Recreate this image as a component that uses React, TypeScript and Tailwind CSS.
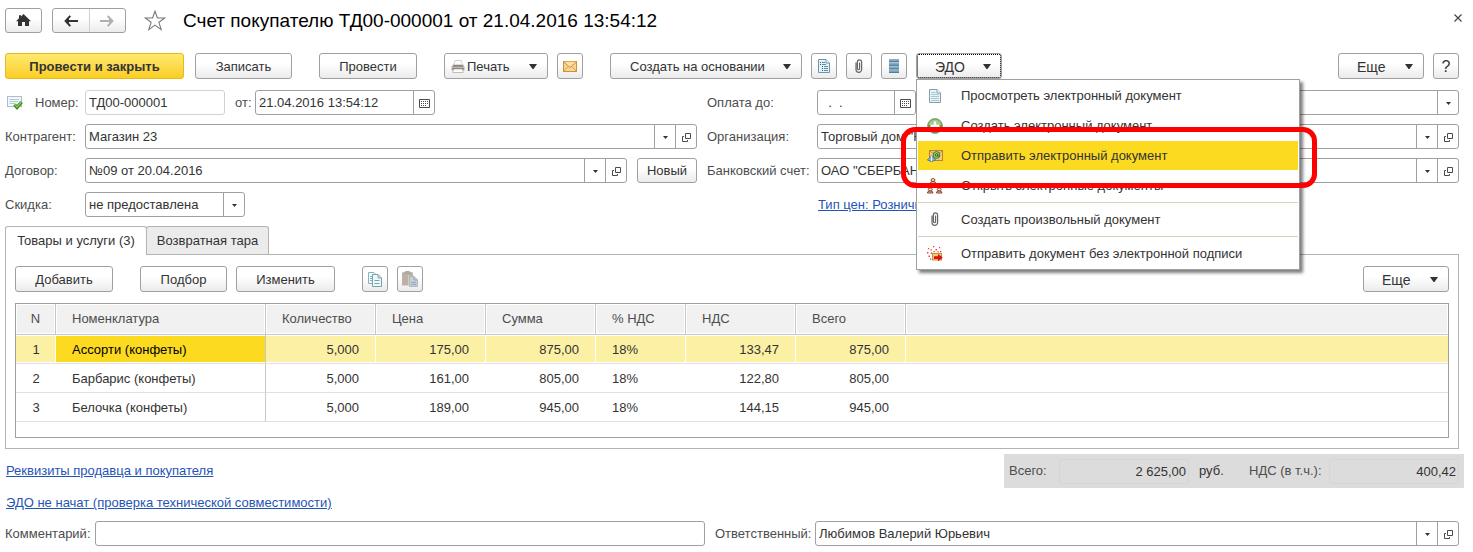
import clsx from 'clsx';
import React, { useState } from 'react';

interface IRow {
  name: string;
  qty: string;
  price: string;
  sum: string;
  vatRate: string;
  vat: string;
  total: string;
}

const rows: IRow[] = [
  { name: 'Ассорти (конфеты)', qty: '5,000', price: '175,00', sum: '875,00', vatRate: '18%', vat: '133,47', total: '875,00' },
  { name: 'Барбарис (конфеты)', qty: '5,000', price: '161,00', sum: '805,00', vatRate: '18%', vat: '122,80', total: '805,00' },
  { name: 'Белочка (конфеты)', qty: '5,000', price: '189,00', sum: '945,00', vatRate: '18%', vat: '144,15', total: '945,00' },
];

const columns = ['Номенклатура', 'Количество', 'Цена', 'Сумма', '% НДС', 'НДС', 'Всего'];

// Icons
const HomeIcon = () => (
  <svg width="15" height="13" viewBox="0 0 15 13" fill="#333">
    <path d="M7.5 0 15 7.2H13V12H9V8H6V12H2V7.2H0L3 4.3V1.3H5V2.4Z" />
  </svg>
);

const ArrowIcon = ({ color, flip }: { color: string; flip?: boolean }) => (
  <svg width="14" height="12" viewBox="0 0 14 12" fill="none" stroke={color} strokeWidth="2" className={flip ? 'rotate-180' : ''}>
    <path d="M1.5 6H14" />
    <path d="M6.3 .8 1.6 6 6.3 11.2" />
    <path d="M5 3 2 6 5 9Z" fill={color} stroke="none" />
  </svg>
);

const StarIcon = () => (
  <svg width="22" height="21" viewBox="0 0 22 21" fill="#fff" stroke="#777" strokeWidth="1.1">
    <path d="M11 1.2 13.4 8H20.8L14.9 12.3 17.2 19.6 11 15.1 4.8 19.6 7.1 12.3 1.2 8H8.6Z" />
  </svg>
);

const Caret = () => (
  <svg width="8" height="5" viewBox="0 0 8 5" fill="#333" className="shrink-0">
    <path d="M0 0H8L4.5 5H3.5Z" />
  </svg>
);

const SmallCaret = () => (
  <svg width="6" height="5" viewBox="0 0 6 5" fill="#333">
    <path d="M1 2H6L3.5 5Z" />
  </svg>
);

const OpenIcon = () => (
  <svg width="10" height="11" viewBox="0 0 10 11" fill="none" stroke="#4a4a4a">
    <path d="M4.5 2.5H9.5V7.5H4.5Z" />
    <path d="M3 5.5H1.5V10.5H6.5V9" />
  </svg>
);

const CalendarIcon = () => (
  <svg width="12" height="11" viewBox="0 0 12 11" fill="none" stroke="#4a4a4a">
    <path d="M1.5 2.5H11.5V10.5H1.5Z" />
    <path d="M3 4.5H10M3 6.5H10M3 8.5H8" strokeDasharray="1 1" />
  </svg>
);

const PrinterIcon = () => (
  <svg width="14" height="13" viewBox="0 0 14 13">
    <path d="M4 .5H10.5L11.5 5.5H2.5Z" fill="#fafbfc" stroke="#c3c8cd" strokeWidth=".8" />
    <path d="M2 4.5H12.2L13.6 7V10.5H.4V7Z" fill="#bdb8b0" />
    <path d="M2.5 5H11.6L12.4 6.8H1.6Z" fill="#8c8780" />
    <path d="M1.5 8.4H12.5V9.6H1.5Z" fill="#5a5650" />
    <path d="M2.6 9H11.4L12.2 12.5H1.8Z" fill="#fdfdf9" stroke="#aaa69e" strokeWidth=".7" />
  </svg>
);

const MailIcon = () => (
  <svg width="14" height="11" viewBox="0 0 14 11" fill="none" stroke="#cf8f35">
    <rect x=".5" y=".5" width="13" height="10" fill="#f9d594" />
    <path d="M.5 10.5 5 5.4M13.5 10.5 9 5.4" stroke="#dd9e45" />
    <path d="M.5 .8 7 6.6 13.5 .8" fill="#fbe0a6" />
  </svg>
);

const ListDocIcon = () => (
  <svg width="12" height="15" viewBox="0 0 12 15" fill="none" stroke="#6e96ab">
    <path d="M.5 .5H8L11.5 4V13.5H.5Z" fill="#e6f2f7" />
    <path d="M8 .5V4H11.5" fill="#fff" />
    <path d="M2 3.5H3M2 5.5H3M4 7.5H5M4 9.5H5M4 11.5H5" stroke="#2f5d75" />
    <path d="M4 3.5H7M4 5.5H8M6 7.5H10M6 9.5H10M6 11.5H10" stroke="#5c8ba3" />
  </svg>
);

const ClipIcon = () => (
  <svg width="8" height="15" viewBox="0 0 8 15" fill="none" stroke="#666" strokeWidth="1.2">
    <path d="M1 3.5V10.5a2.8 2.8 0 0 0 5.6 0V3a2.1 2.1 0 0 0-4.2 0V9.5a1.1 1.1 0 0 0 2.2 0V3.5" />
  </svg>
);

const StackIcon = () => (
  <svg width="10" height="15" viewBox="0 0 10 15">
    {[0, 3.6, 7.2, 10.8].map((y) => (
      <g key={y}>
        <rect y={y} width="10" height="3.2" fill="#86adc8" />
        <rect y={y + 2} width="10" height="1.2" fill="#557c9b" />
      </g>
    ))}
  </svg>
);

const PostedIcon = () => (
  <svg width="16" height="14" viewBox="0 0 16 14" fill="none">
    <rect x=".5" y=".5" width="14" height="10" fill="#f3f8fb" stroke="#a9bfcc" />
    <path d="M2.5 3.5H12M2.5 5.5H11M2.5 7.5H8" stroke="#b5c9d4" />
    <path d="M7.5 8.6 10 11.4 14.6 6" stroke="#3f8a1f" strokeWidth="3.4" />
    <path d="M7.6 8.4 10 11 14.4 5.8" stroke="#86cc52" strokeWidth="1.4" />
  </svg>
);

const DocIcon = () => (
  <svg width="12" height="14" viewBox="0 0 12 14" fill="none" stroke="#7f9fae">
    <path d="M.5 .5H8L11.5 4V13.5H.5Z" fill="#eaf4f8" />
    <path d="M8 .5V4H11.5" fill="#fff" />
    <path d="M2 3.5H6.5M2 5.5H10M2 7.5H10M2 9.5H10M2 11.5H10" stroke="#a9c6d3" />
  </svg>
);

const PlusIcon = () => (
  <svg width="16" height="16" viewBox="0 0 16 16">
    <circle cx="8" cy="8" r="7.5" fill="#5d9c3a" stroke="#8fae80" />
    <path d="M1.8 7a6.2 5.4 0 0 1 12.4 0Z" fill="#a6c894" />
    <path d="M6.8 3.5H9.2V6.8H12.5V9.2H9.2V12.5H6.8V9.2H3.5V6.8H6.8Z" fill="#fff" />
  </svg>
);

const SendIcon = () => (
  <svg width="16" height="12" viewBox="0 0 16 12" fill="none">
    <rect x="2.5" y=".5" width="13" height="10" fill="#f3c878" stroke="#b98136" />
    <path d="M3 1 9 6 15 1" stroke="#c98f3f" />
    <circle cx="9.5" cy="5" r="3.4" fill="#a9cf7c" stroke="#3c7a2a" />
    <circle cx="9.5" cy="5" r="1.3" stroke="#2a6420" />
    <path d="M10.8 3.6V6.3H12.6" stroke="#2a6420" strokeWidth=".8" />
    <path d="M.4 10 4.5 5.8 8.6 10 4.5 11.6Z" fill="#8db9e0" stroke="#3a6897" strokeWidth=".8" />
    <path d="M4.5 6V11.2" stroke="#e8f3fb" />
  </svg>
);

const PeopleIcon = () => (
  <svg width="16" height="16" viewBox="0 0 16 16" fill="#fbe9c8" stroke="#7d3527" strokeWidth=".9">
    <path d="M6.5 6 4 9.5M7.5 6 11 9.5" strokeDasharray="1.5 1" />
    {[[6, .8], [3.2, 10.2], [12.2, 10.2]].map(([x, y]) => (
      <g key={`${x}-${y}`}>
        <path d={`M${x - 2.8} ${y + 4.8}a2.8 2.2 0 0 1 5.6 0Z`} fill="#f0b48e" />
        <ellipse cx={x} cy={y + 1.2} rx="2" ry="1.4" />
      </g>
    ))}
  </svg>
);

const SendPlainIcon = () => (
  <svg width="16" height="16" viewBox="0 0 16 16">
    <rect x="5.5" y="7.5" width="9" height="6.5" fill="#f3c878" stroke="#c98f3f" />
    <path d="M7 10.2H11V8L15.8 11.6 11 15.2V13H7Z" fill="#e01010" />
    <g fill="#e0453a">
      <path d="M1 2h1.2v1.2H1zM6 0h1.3v1.3H6zM12 1h1.2v1.2H12zM3.5 3.2h1.4v1.4H3.5zM8.5 3h1.4v1.4H8.5zM0 6h1.4v1.4H0zM3.8 6.5h1.5V8H3.8zM6.5 5h1.3v1.3H6.5zM1.5 9.5H3V11H1.5zM13 5h1.3v1.3H13zM10.5 5.3h1.2v1.2h-1.2zM3 12.5h1.2v1.2H3z" />
    </g>
  </svg>
);

const CopyIcon = () => (
  <svg width="14" height="15" viewBox="0 0 14 15" fill="#f3f9fb" stroke="#86b4c2">
    <path d="M.5 .5H6L8.5 3V11.5H.5Z" />
    <path d="M2 4.5H4M2 6.5H4M2 8.5H4" />
    <path d="M4.5 2.5H10L13.5 6V14.5H4.5Z" stroke="#6fa6ad" />
    <path d="M10 2.5V6H13.5M6.5 8.5H11.5M6.5 11.5H11.5" fill="none" stroke="#6fa6ad" />
  </svg>
);

const PasteIcon = () => (
  <svg width="16" height="17" viewBox="0 0 16 17">
    <rect x="0" y="1.5" width="11" height="13" fill="#bfb0a3" />
    <path d="M1.5 3H9.5V1.5L7 0H4L1.5 1.5Z" fill="#aaa" />
    <path d="M7.5 5.5H12L15.5 9V15.5H7.5Z" fill="#c5cfd8" stroke="#a9bac6" />
    <path d="M6.5 4V14" stroke="#d8d2a0" />
    <path d="M12 5.5V9H15.5M9 11.5H14M9 13.5H14" fill="none" stroke="#93aabc" />
  </svg>
);

// Controls
const buttonStyle =
  'flex items-center rounded-[3px] border border-[#a0a0a0] bg-linear-to-b from-white from-40% to-[#ebebeb] text-[#333] whitespace-nowrap';

interface IButton extends React.ButtonHTMLAttributes<HTMLButtonElement> {
  menu?: boolean;
}

const Button = ({ menu, className, children, ...rest }: IButton) => (
  <button
    type="button"
    className={clsx(
      buttonStyle,
      'h-[26px] pt-px',
      menu ? 'justify-between pr-[10px]' : 'justify-center',
      className,
    )}
    {...rest}
  >
    {children}
    {menu && <Caret />}
  </button>
);

interface IField {
  id: string;
  value?: string;
  label?: string;
  tools?: ('list' | 'open' | 'date')[];
  className?: string;
  readOnly?: boolean;
}

const toolTitle = { list: 'Выбрать', open: 'Открыть', date: 'Календарь' };

const Field = ({ id, value = '', label, tools = [], className, readOnly }: IField) => (
  <div
    className={clsx(
      'flex h-[25px] min-w-0 rounded-[3px] border bg-white',
      readOnly ? 'border-[#d2d2d2]' : 'border-[#a0a0a0]',
      className,
    )}
  >
    <input
      id={id}
      aria-label={label}
      defaultValue={value}
      readOnly={readOnly}
      className="w-0 min-w-0 flex-1 bg-transparent px-[3px] text-[#333] outline-none"
    />
    {tools.map((tool) => (
      <button
        key={tool}
        type="button"
        aria-label={toolTitle[tool]}
        className="flex w-[21px] shrink-0 items-center justify-center border-l border-[#a0a0a0]"
      >
        {tool === 'list' && <SmallCaret />}
        {tool === 'open' && <OpenIcon />}
        {tool === 'date' && <CalendarIcon />}
      </button>
    ))}
  </div>
);

const SelectField = ({ id, value, label, className }: IField) => (
  <div className={clsx('flex h-[25px] rounded-[3px] border border-[#a0a0a0] bg-white', className)}>
    <select
      id={id}
      aria-label={label}
      className="-mr-[21px] w-0 flex-1 appearance-none bg-transparent pl-[3px] pr-[21px] text-[#333] outline-none"
    >
      <option>{value}</option>
    </select>
    <span className="pointer-events-none flex w-[21px] items-center justify-center border-l border-[#a0a0a0]">
      <SmallCaret />
    </span>
  </div>
);

const Label = ({ htmlFor, children, className }: { htmlFor: string; children: string; className?: string }) => (
  <label htmlFor={htmlFor} className={clsx('shrink-0 whitespace-nowrap text-[#4d4d4d]', className)}>
    {children}
  </label>
);

const MenuItem = ({ icon, active, children }: { icon: React.ReactNode; active?: boolean; children: string }) => (
  <li role="none" className="pt-px">
    <button
      type="button"
      role="menuitem"
      className={clsx('flex h-[29px] w-full items-center gap-[18px] pl-[9px] text-left text-[#333]', {
        'bg-[#fbda20]': active,
      })}
    >
      <span className="flex w-4 items-center justify-center">{icon}</span>
      {children}
    </button>
  </li>
);

const MenuLine = () => <li role="separator" className="mb-px mt-[2px] h-px bg-[#d5d1bb]"></li>;

const EdoMenu = () => (
  <div className="absolute left-0 top-full z-10 w-[384px]">
    <ul
      role="menu"
      className="border border-[#a0a0a0] bg-white px-px pb-px shadow-[3px_3px_3px_rgba(0,0,0,0.5)]"
    >
      <MenuItem icon={<DocIcon />}>Просмотреть электронный документ</MenuItem>
      <MenuItem icon={<PlusIcon />}>Создать электронный документ</MenuItem>
      <MenuItem icon={<SendIcon />} active>
        Отправить электронный документ
      </MenuItem>
      <MenuItem icon={<PeopleIcon />}>Открыть электронные документы</MenuItem>
      <MenuLine />
      <MenuItem icon={<ClipIcon />}>Создать произвольный документ</MenuItem>
      <MenuLine />
      <MenuItem icon={<SendPlainIcon />}>Отправить документ без электронной подписи</MenuItem>
    </ul>
    <div className="pointer-events-none absolute -left-[15px] -right-[17px] top-[48px] h-[61px] rounded-[14px] border-5 border-[#ff0000]"></div>
  </div>
);

const App = () => {
  const [selected, setSelected] = useState<number>(0);

  return (
    <main className="bg-white pb-[6px] pl-[5px] pr-[14px] pt-2 font-['Liberation_Sans',Arial,sans-serif] text-[13px] leading-4 text-[#333]">
      <header className="flex h-[25px] items-center">
        <button type="button" aria-label="Домой" className={clsx(buttonStyle, 'h-[25px] w-[37px] justify-center')}>
          <HomeIcon />
        </button>
        <div className={clsx(buttonStyle, 'ml-[10px] h-[25px] w-[74px]')}>
          <button type="button" aria-label="Назад" className="flex h-full flex-1 items-center justify-center">
            <ArrowIcon color="#333" />
          </button>
          <button
            type="button"
            aria-label="Вперед"
            className="flex h-full flex-1 items-center justify-center border-l border-[#d0d0d0]"
          >
            <ArrowIcon color="#b0b0b0" flip />
          </button>
        </div>
        <button type="button" aria-label="В избранное" className="ml-[18px]">
          <StarIcon />
        </button>
        <h1 className="ml-[17px] pt-px text-[19px] leading-6 text-black">
          Счет покупателю ТД00-000001 от 21.04.2016 13:54:12
        </h1>
        <button type="button" aria-label="Закрыть" className="-mr-[3px] ml-auto self-start pt-[6px]">
          <svg width="8" height="8" viewBox="0 0 8 8" stroke="#444" strokeWidth="1.2">
            <path d="M.5 .5 7.5 7.5M7.5 .5 .5 7.5" />
          </svg>
        </button>
      </header>

      <div className="mt-5 flex gap-[27px]">
        <div className="flex gap-[11px]">
          <button
            type="button"
            className="h-[26px] w-[179px] rounded-[3px] border border-[#e8b91a] bg-linear-to-b from-[#fdea6c] to-[#fbce1e] pt-px font-bold text-[#333]"
          >
            Провести и закрыть
          </button>
          <Button className="w-[97px]">Записать</Button>
        </div>
        <Button className="w-[98px]">Провести</Button>
        <div className="flex gap-[9px]">
          <Button menu className="w-[104px] pl-[6px]">
            <span className="flex items-center gap-[2px]">
              <PrinterIcon />
              Печать
            </span>
          </Button>
          <Button className="w-[26px]" aria-label="Отправить по почте">
            <MailIcon />
          </Button>
        </div>
        <div className="flex gap-[9px]">
          <Button menu className="w-[192px] pl-[19px]">
            Создать на основании
          </Button>
          <Button className="w-[26px]" aria-label="Отчеты">
            <ListDocIcon />
          </Button>
          <Button className="w-[26px]" aria-label="Файлы">
            <ClipIcon />
          </Button>
          <Button className="w-[26px]" aria-label="Журнал">
            <StackIcon />
          </Button>
          <div className="relative">
            <Button
              menu
              aria-expanded
              className="w-[86px] pl-[18px] text-[14px] outline-1 -outline-offset-2 outline-dotted outline-black"
            >
              ЭДО
            </Button>
            <EdoMenu />
          </div>
        </div>
        <div className="ml-auto flex gap-[9px]">
          <Button menu className="w-[86px] pl-[18px] text-[14px]">
            Еще
          </Button>
          <Button className="w-[26px] text-[16px]">?</Button>
        </div>
      </div>

      <form className="mt-[11px] grid grid-cols-[692fr_752fr] gap-x-[10px] gap-y-[9px]">
        <div className="flex items-center">
          <span className="flex w-[80px] shrink-0 items-center gap-[12px] pl-[2px]">
            <PostedIcon />
            <Label htmlFor="number">Номер:</Label>
          </span>
          <Field id="number" value="ТД00-000001" className="w-[140px]" readOnly />
          <Label htmlFor="date" className="w-[30px] pl-[10px]">
            от:
          </Label>
          <Field id="date" value="21.04.2016 13:54:12" tools={['date']} className="w-[180px]" />
        </div>
        <div className="flex items-center">
          <Label htmlFor="payUntil" className="w-[110px]">
            Оплата до:
          </Label>
          <Field id="payUntil" value="  .  ." tools={['date']} className="w-[99px]" />
          <SelectField id="store" label="Склад" className="ml-[100px] flex-1" />
        </div>

        <div className="flex items-center">
          <Label htmlFor="contractor" className="w-[80px]">
            Контрагент:
          </Label>
          <Field id="contractor" value="Магазин 23" tools={['list', 'open']} className="flex-1" />
        </div>
        <div className="flex items-center">
          <Label htmlFor="company" className="w-[110px]">
            Организация:
          </Label>
          <Field id="company" value={'Торговый дом "Комплексный"'} tools={['list', 'open']} className="flex-1" />
        </div>

        <div className="flex items-center">
          <Label htmlFor="contract" className="w-[80px]">
            Договор:
          </Label>
          <Field id="contract" value="№09 от 20.04.2016" tools={['list', 'open']} className="flex-1" />
          <button type="button" className={clsx(buttonStyle, 'ml-[10px] h-[25px] w-[60px] justify-center')}>
            Новый
          </button>
        </div>
        <div className="flex items-center">
          <Label htmlFor="account" className="w-[110px]">
            Банковский счет:
          </Label>
          <Field id="account" value={'ОАО "СБЕРБАНК РОССИИ"'} tools={['list', 'open']} className="flex-1" />
        </div>

        <div className="flex items-center">
          <Label htmlFor="discount" className="w-[80px]">
            Скидка:
          </Label>
          <SelectField id="discount" value="не предоставлена" className="w-[160px]" />
        </div>
        <div className="flex items-center pl-[111px]">
          <a href="#prices" className="text-[#1f55b5] underline">
            Тип цен: Розничная
          </a>
        </div>
      </form>

      <div role="tablist" className="relative mt-[9px] flex">
        <button
          type="button"
          role="tab"
          aria-selected
          className="-mb-px h-[29px] w-[142px] rounded-t-[3px] border border-b-0 border-[#b3b3b3] bg-white"
        >
          Товары и услуги (3)
        </button>
        <button
          type="button"
          role="tab"
          aria-selected={false}
          className="-ml-px h-[28px] w-[123px] rounded-t-[3px] border border-b-0 border-[#b3b3b3] bg-[#ebebeb]"
        >
          Возвратная тара
        </button>
      </div>
      <section className="border border-[#b3b3b3] px-[9px] pb-[10px] pt-[11px]">
        <div className="flex gap-[27px]">
          <Button className="w-[98px]">Добавить</Button>
          <div className="flex gap-[9px]">
            <Button className="w-[87px]">Подбор</Button>
            <Button className="w-[99px]">Изменить</Button>
          </div>
          <div className="flex gap-[9px]">
            <Button className="w-[26px]" aria-label="Скопировать">
              <CopyIcon />
            </Button>
            <Button className="w-[26px]" aria-label="Вставить">
              <PasteIcon />
            </Button>
          </div>
          <Button menu className="ml-auto w-[86px] pl-[18px] text-[14px]">
            Еще
          </Button>
        </div>

        <div className="mt-[11px] border border-[#a0a0a0] pb-[15px]">
          <table className="w-full table-fixed border-separate border-spacing-0">
            <colgroup>
              <col className="w-[40px]" />
              <col className="w-[210px]" />
              <col className="w-[110px]" />
              <col className="w-[110px]" />
              <col className="w-[110px]" />
              <col className="w-[90px]" />
              <col className="w-[110px]" />
              <col className="w-[110px]" />
              <col />
            </colgroup>
            <thead>
              <tr className="h-[31px] bg-[#f1f1f1] text-[#4d4d4d]">
                <th className="border-b border-r border-[#c8c8c8] p-0 font-normal shadow-[inset_0_0_0_1px_#fff]">N</th>
                {columns.map((column) => (
                  <th
                    key={column}
                    className="border-b border-r border-[#c8c8c8] px-4 py-0 text-left font-normal shadow-[inset_0_0_0_1px_#fff]"
                  >
                    {column}
                  </th>
                ))}
                <th className="border-b border-[#c8c8c8] p-0 shadow-[inset_0_0_0_1px_#fff]"></th>
              </tr>
            </thead>
            <tbody>
              {rows.map((row, idx) => {
                const active = idx === selected;
                const cell = clsx('border-b border-b-[#e0e0e0] pb-0 pt-[2px]', {
                  'bg-[#fcf0a5] shadow-[inset_0_1px_#fff,inset_0_-1px_#fff,inset_-1px_0_#fff]': active,
                });
                const number = clsx(cell, 'pl-0 pr-[17px] text-right');
                return (
                  <tr key={idx} className="h-[29px]" onClick={() => setSelected(idx)}>
                    <td className={clsx(cell, 'px-0 text-center')}>{idx + 1}</td>
                    <td
                      className={clsx(
                        'border-b border-r border-b-[#e0e0e0] border-r-[#c8c8c8] px-4 pb-0 pt-[2px]',
                        { 'bg-[#fbda20] text-black shadow-[inset_0_1px_#fff,inset_0_-1px_#fff]': active },
                      )}
                    >
                      {row.name}
                    </td>
                    <td className={number}>{row.qty}</td>
                    <td className={number}>{row.price}</td>
                    <td className={number}>{row.sum}</td>
                    <td className={clsx(cell, 'px-4')}>{row.vatRate}</td>
                    <td className={number}>{row.vat}</td>
                    <td className={number}>{row.total}</td>
                    <td
                      className={clsx('border-b border-b-[#e0e0e0] p-0', {
                        'bg-[#fcf0a5] shadow-[inset_0_1px_#fff,inset_0_-1px_#fff]': active,
                      })}
                    ></td>
                  </tr>
                );
              })}
            </tbody>
          </table>
        </div>
      </section>

      <div className="mt-[5px] flex items-start justify-between">
        <div className="flex flex-col items-start gap-4 pl-px pt-[9px] text-[#1f55b5] underline">
          <a href="#details">Реквизиты продавца и покупателя</a>
          <a href="#edo">ЭДО не начат (проверка технической совместимости)</a>
        </div>
        <div className="-mr-[5px] flex h-[34px] items-center bg-[#dcdcdc] px-[5px]">
          <Label htmlFor="total" className="w-[50px]">
            Всего:
          </Label>
          <input
            id="total"
            readOnly
            defaultValue="2 625,00"
            className="h-[25px] w-[130px] rounded-[3px] border border-[#d6d6d6] px-[2px] text-right"
          />
          <span className="w-[60px] pl-[10px]">руб.</span>
          <Label htmlFor="vat" className="w-[80px]">
            НДС (в т.ч.):
          </Label>
          <input
            id="vat"
            readOnly
            defaultValue="400,42"
            className="h-[25px] w-[130px] rounded-[3px] border border-[#d6d6d6] px-[2px] text-right"
          />
        </div>
      </div>

      <div className="mt-[10px] grid grid-cols-[700fr_744fr] gap-x-[10px]">
        <div className="flex items-center">
          <Label htmlFor="comment" className="w-[90px]">
            Комментарий:
          </Label>
          <Field id="comment" className="flex-1" />
        </div>
        <div className="flex items-center">
          <Label htmlFor="manager" className="w-[100px]">
            Ответственный:
          </Label>
          <Field id="manager" value="Любимов Валерий Юрьевич" tools={['list', 'open']} className="flex-1" />
        </div>
      </div>
    </main>
  );
};

export default App;
